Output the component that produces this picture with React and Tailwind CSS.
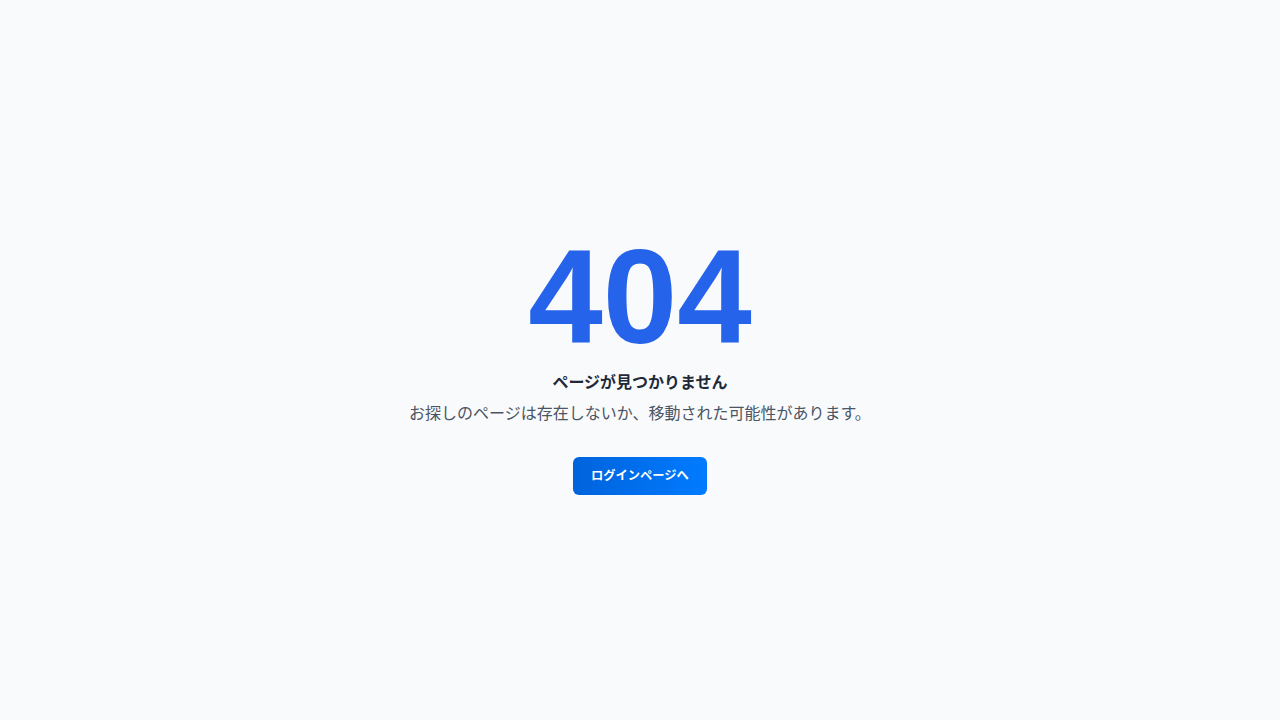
import React from 'react';

const NotFound = () => {
  return (
    <div className="min-h-screen bg-[#f8fafc] flex items-center justify-center pt-[5px] font-['Liberation_Sans','Noto_Sans_CJK_JP',sans-serif]">
      <div className="flex flex-col items-center text-center">
        {/* 404 */}
        <h1 className="text-[134px] leading-none font-bold text-[#2563eb] mb-[7px]">404</h1>

        <h2 className="text-base leading-6 font-bold text-[#1f2937] mb-[7px]">
          ページが見つかりません
        </h2>
        <p className="text-base leading-6 text-[#4b5563]">
          お探しのページは存在しないか、移動された可能性があります。
        </p>

        <a
          href="/login"
          className="mt-[31px] h-[38px] px-[18px] pt-px flex items-center rounded-md bg-gradient-to-r from-[#0063dc] to-[#007bff] text-white text-[12.25px] font-bold"
        >
          ログインページへ
        </a>
      </div>
    </div>
  );
};

export default NotFound;
